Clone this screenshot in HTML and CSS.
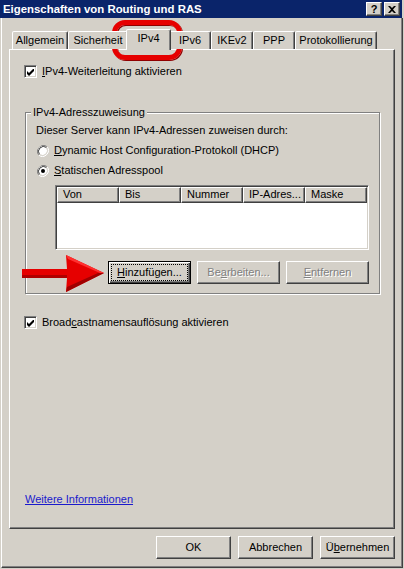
FILE: index.html
```html
<!DOCTYPE html>
<html>
<head>
<meta charset="utf-8">
<link rel="stylesheet" href="styles.css">
</head>
<body>
<div class="titlebar">
  <span class="title">Eigenschaften von Routing und RAS</span>
  <div class="tbtns">
    <span class="tbtn q">?</span>
    <span class="tbtn"><svg width="8" height="7" viewBox="0 0 8 7"><path d="M0 0h2l2 2 2-2h2L5 3.5 8 7H6L4 5 2 7H0l3-3.5z" fill="#000"/></svg></span>
  </div>
</div>
<div class="frame">
  <div class="tabs">
    <div class="tab w-allg">Allgemein</div>
    <div class="tab w-sich">Sicherheit</div>
    <div class="tab sel w-ipv4">IPv4</div>
    <div class="tab w-ipv6">IPv6</div>
    <div class="tab w-ike">IKEv2</div>
    <div class="tab w-ppp">PPP</div>
    <div class="tab w-prot">Protokollierung</div>
  </div>
  <div class="page">
    <div class="check row1">
      <span class="cbox"><svg width="7" height="7" viewBox="0 0 7 7"><path d="M0 2l2 2 5-5v3l-5 5-2-2z" fill="#000"/></svg></span>
      <span><u>I</u>Pv4-Weiterleitung aktivieren</span>
    </div>
    <div class="group">
      <div class="legend">IPv4-Adresszuweisung</div>
      <div class="desc">Dieser Server kann IPv4-Adressen zuweisen durch:</div>
      <div class="radio r1">
        <svg class="rbtn" width="12" height="12" viewBox="0 0 12 12">
          <path d="M10.2 1.8A6 6 0 0 0 1.8 10.2" stroke="#808080" stroke-width="1" fill="none"/>
          <circle cx="6" cy="6" r="5" fill="#fff"/>
          <path d="M1.8 10.2A6 6 0 0 0 10.2 1.8" stroke="#fff" fill="none"/>
          <path d="M9.5 2.5A5 5 0 0 0 2.5 9.5" stroke="#404040" fill="none"/>
          <path d="M2.5 9.5A5 5 0 0 0 9.5 2.5" stroke="#d4d0c8" fill="none"/>
        </svg>
        <span><u>D</u>ynamic Host Configuration-Protokoll (DHCP)</span>
      </div>
      <div class="radio r2">
        <svg class="rbtn" width="12" height="12" viewBox="0 0 12 12">
          <path d="M10.2 1.8A6 6 0 0 0 1.8 10.2" stroke="#808080" stroke-width="1" fill="none"/>
          <circle cx="6" cy="6" r="5" fill="#fff"/>
          <path d="M1.8 10.2A6 6 0 0 0 10.2 1.8" stroke="#fff" fill="none"/>
          <path d="M9.5 2.5A5 5 0 0 0 2.5 9.5" stroke="#404040" fill="none"/>
          <path d="M2.5 9.5A5 5 0 0 0 9.5 2.5" stroke="#d4d0c8" fill="none"/>
          <circle cx="6" cy="6" r="2" fill="#000"/>
        </svg>
        <span><u>S</u>tatischen Adresspool</span>
      </div>
      <div class="list">
        <div class="lhead">
          <div class="col">Von</div>
          <div class="col">Bis</div>
          <div class="col">Nummer</div>
          <div class="col">IP-Adres...</div>
          <div class="col">Maske</div>
        </div>
      </div>
      <div class="lbtns">
        <div class="btn def"><span class="focus"><u>H</u>inzufügen...</span></div>
        <div class="btn dis">Be<u>a</u>rbeiten...</div>
        <div class="btn dis"><u>E</u>ntfernen</div>
      </div>
    </div>
    <div class="check row2">
      <span class="cbox"><svg width="7" height="7" viewBox="0 0 7 7"><path d="M0 2l2 2 5-5v3l-5 5-2-2z" fill="#000"/></svg></span>
      <span>Broad<u>c</u>astnamensauflösung aktivieren</span>
    </div>
    <a class="link">Weitere Informationen</a>
  </div>
  <div class="footer">
    <div class="btn">OK</div>
    <div class="btn">Abbrechen</div>
    <div class="btn">Ü<u>b</u>ernehmen</div>
  </div>
</div>
<div class="mark"></div>
<svg class="arrow" width="86" height="40" viewBox="0 0 86 40">
  <polygon points="2,15 47,15 46,1 84,19 46,38 47,24 2,24" fill="#e60000"/>
  <polygon points="2,21 47,21 47,24 2,24" fill="#b00000"/>
  <polygon points="84,19 46,38 47,33 78,19" fill="#a00000"/>
  <polygon points="46,1 84,19 80,19 48,5" fill="#ff3030"/>
</svg>
</body>
</html>
```
FILE: styles.css
```css
* { box-sizing: border-box; }
body {
  margin: 0;
  width: 404px;
  height: 569px;
  overflow: hidden;
  position: relative;
  background: #d4d0c8;
  font: 11px "Liberation Sans", Arial, sans-serif;
  color: #000;
}
u { text-decoration: underline; text-underline-offset: 1px; }

.titlebar {
  width: 402px;
  height: 18px;
  background: #0a246a;
  display: flex;
  align-items: center;
  padding: 0 2px 0 3px;
}
.title { flex: 1; color: #fff; font-weight: bold; font-size: 11.4px; }
.tbtns { display: flex; gap: 2px; }
.tbtn {
  width: 16px;
  height: 14px;
  background: #d4d0c8;
  border: 1px solid;
  border-color: #fff #404040 #404040 #fff;
  box-shadow: inset -1px -1px 0 #808080;
  display: flex;
  align-items: center;
  justify-content: center;
}
.tbtn.q { font-weight: bold; font-size: 11px; line-height: 12px; }

.frame {
  margin-left: 1px;
  width: 402px;
  height: 550px;
  border-left: 1px solid #fff;
  border-right: 1px solid #404040;
  border-bottom: 1px solid #404040;
  box-shadow: inset -1px -1px 0 #808080;
  padding-top: 11px;
}

.tabs {
  display: flex;
  align-items: flex-end;
  height: 20px;
  margin-left: 10px;
  position: relative;
  z-index: 1;
}
.tab {
  height: 18px;
  border: 1px solid;
  border-bottom: none;
  border-color: #fff #404040 transparent #fff;
  border-radius: 2px 2px 0 0;
  box-shadow: inset -1px 0 0 #808080;
  text-align: center;
  line-height: 17px;
  background: #d4d0c8;
  white-space: nowrap;
  overflow: hidden;
}
.tab.sel {
  height: 21px;
  margin: 0 -2px -1px;
  line-height: 16px;
  position: relative;
  z-index: 2;
}
.w-allg { width: 56px; }
.w-sich { width: 60px; }
.w-ipv4 { width: 45px; }
.w-ipv6 { width: 42px; }
.w-ike { width: 42px; }
.w-ppp { width: 42px; }
.w-prot { width: 82px; }

.page {
  margin-left: 7px;
  width: 386px;
  height: 480px;
  border: 1px solid;
  border-color: #fff #404040 #404040 #fff;
  box-shadow: inset -1px -1px 0 #808080;
  display: flex;
  flex-direction: column;
  align-items: flex-start;
}

.check {
  display: flex;
  align-items: center;
  gap: 5px;
  margin-left: 14px;
  height: 13px;
  line-height: 13px;
}
.row1 { margin-top: 15px; }
.row2 { margin-top: 22px; }
.cbox {
  width: 13px;
  height: 13px;
  background: #fff;
  border: 1px solid;
  border-color: #808080 #fff #fff #808080;
  box-shadow: inset 1px 1px 0 #404040, inset -1px -1px 0 #d4d0c8;
  display: flex;
  align-items: center;
  justify-content: center;
}
.cbox svg { margin: 1px 0 0 0; }

.group {
  margin: 34px 0 0 15px;
  width: 355px;
  height: 182px;
  border: 1px solid #808080;
  box-shadow: inset 1px 1px 0 #fff, 1px 1px 0 #fff;
  padding: 0 10px 9px;
  display: flex;
  flex-direction: column;
}
.legend {
  width: max-content;
  margin: -7px 0 0 -5px;
  padding: 0 2px;
  background: #d4d0c8;
  line-height: 13px;
}
.desc { margin-top: 5px; line-height: 13px; }
.radio {
  display: flex;
  align-items: center;
  gap: 5px;
  height: 13px;
  line-height: 13px;
  margin-left: 1px;
}
.r1 { margin-top: 7px; }
.r2 { margin-top: 7px; }
.rbtn { display: block; }

.list {
  margin: 8px 0 0 19px;
  width: 314px;
  height: 66px;
  background: #fff;
  border: 1px solid;
  border-color: #808080 #fff #fff #808080;
  box-shadow: inset 1px 1px 0 #404040, inset -1px -1px 0 #d4d0c8;
  padding: 1px;
}
.lhead { display: flex; height: 16px; }
.col {
  width: 62px;
  height: 16px;
  background: #d4d0c8;
  border: 1px solid;
  border-color: #fff #404040 #404040 #fff;
  box-shadow: inset -1px -1px 0 #808080;
  padding-left: 5px;
  line-height: 13px;
  white-space: nowrap;
  overflow: hidden;
}

.lbtns {
  margin-top: 11px;
  display: flex;
  justify-content: flex-end;
  gap: 6px;
}
.lbtns .btn { width: 83px; }

.btn {
  width: 75px;
  height: 23px;
  background: #d4d0c8;
  border: 1px solid;
  border-color: #fff #404040 #404040 #fff;
  box-shadow: inset -1px -1px 0 #808080;
  display: flex;
  align-items: center;
  justify-content: center;
  line-height: 13px;
  white-space: nowrap;
}
.btn.def {
  border-color: #000;
  box-shadow: inset 1px 1px 0 #fff, inset -1px -1px 0 #404040, inset -2px -2px 0 #808080;
}
.focus {
  display: flex;
  align-items: center;
  justify-content: center;
  width: 75px;
  height: 15px;
  outline: 1px dotted #000;
}
.btn.dis { color: #808080; text-shadow: 1px 1px 0 #fff; }

.link {
  margin: auto 0 22px 15px;
  color: #1a1acc;
  text-decoration: underline;
  line-height: 13px;
}

.footer {
  margin-top: 7px;
  display: flex;
  justify-content: flex-end;
  gap: 7px;
  padding-right: 7px;
}

.mark {
  position: absolute;
  left: 112px;
  top: 20px;
  width: 70px;
  height: 40px;
  border: 5px solid #e60000;
  border-radius: 13px;
  box-shadow: 1px 1px 0 #900000, inset 1px 1px 0 #900000;
}
.arrow {
  position: absolute;
  left: 20px;
  top: 254px;
}
```
